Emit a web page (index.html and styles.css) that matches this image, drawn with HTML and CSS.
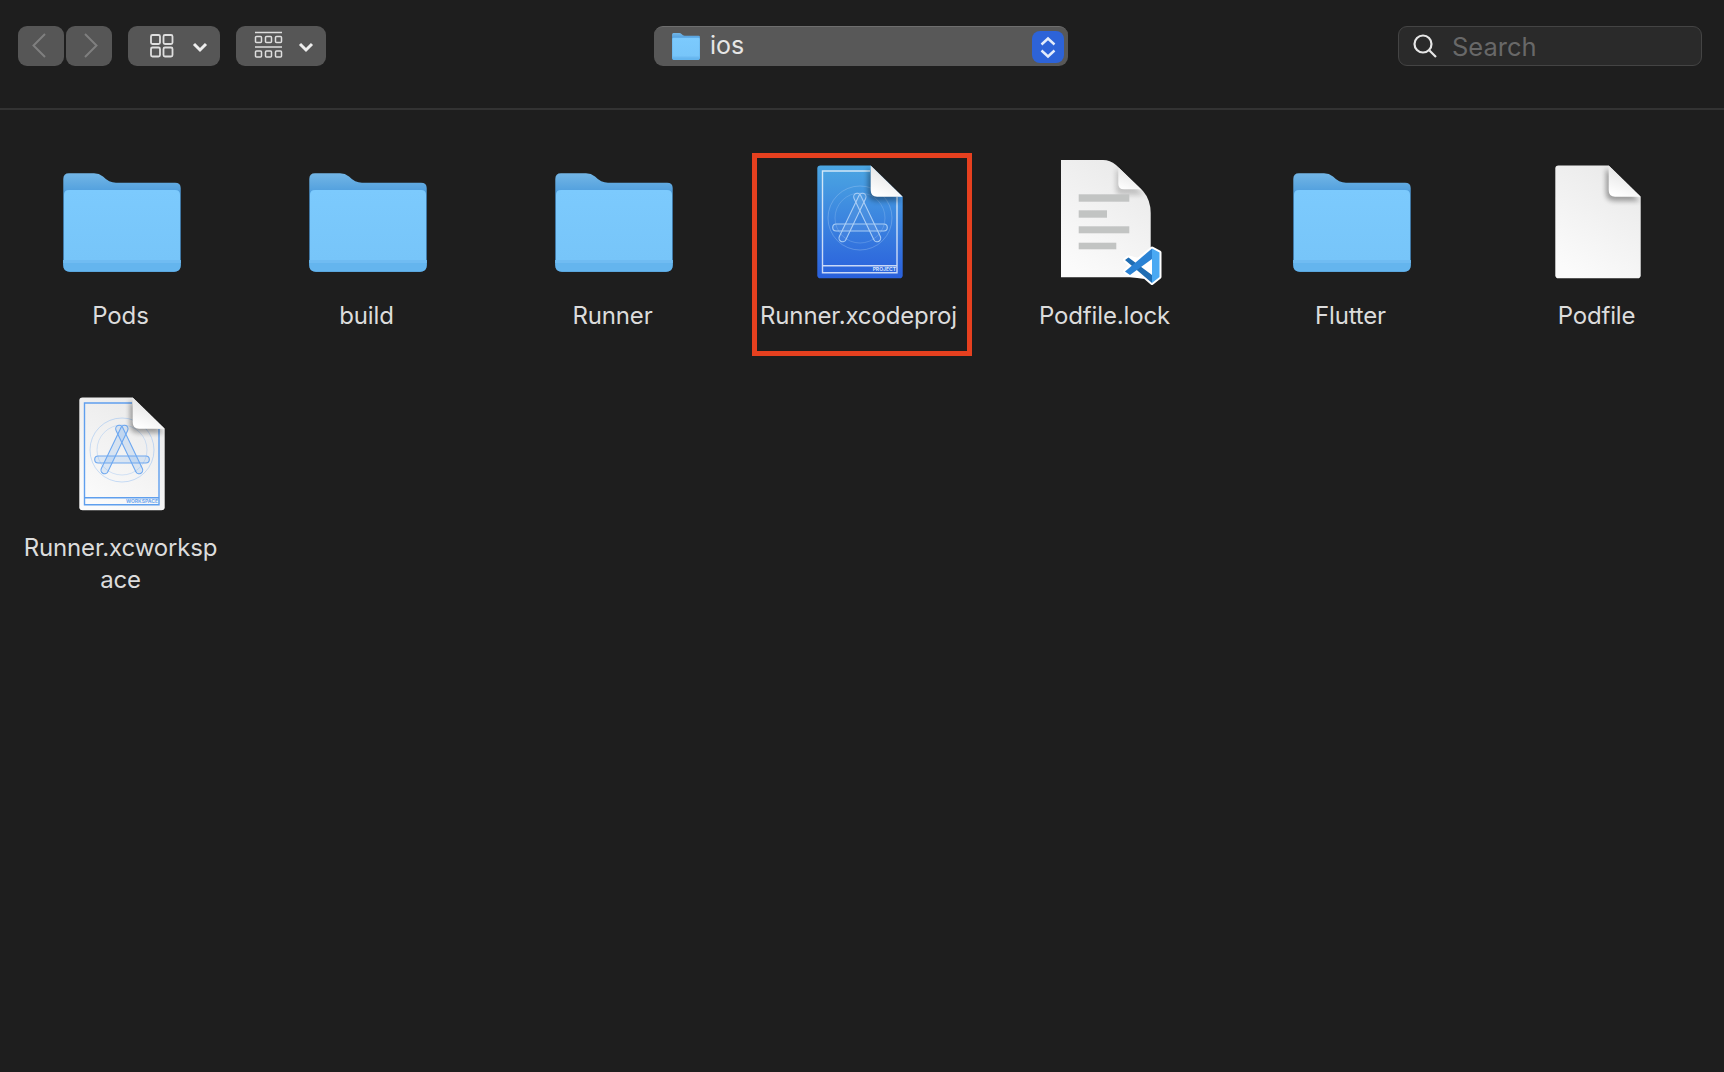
FILE: index.html
```html
<!DOCTYPE html>
<html lang="en">
  <head>
    <meta charset="UTF-8" />
    <title>ios</title>
    <link rel="stylesheet" href="styles.css">
  </head>
  <body>
    <!-- shared icon parts -->
    <svg class="defs" aria-hidden="true">
      <defs>
        <linearGradient id="folderBack" x1="0" y1="0" x2="0" y2="1">
          <stop offset="0" stop-color="#73b6e6" />
          <stop offset="0.2" stop-color="#4f9edd" />
          <stop offset="1" stop-color="#4f9edd" />
        </linearGradient>
        <linearGradient id="folderFront" x1="0" y1="0" x2="0" y2="1">
          <stop offset="0" stop-color="#7ccafd" />
          <stop offset="1" stop-color="#77c5f9" />
        </linearGradient>
        <linearGradient id="foldFill" x1="0.7" y1="0" x2="0.3" y2="1">
          <stop offset="0" stop-color="#dedede" />
          <stop offset="1" stop-color="#ffffff" />
        </linearGradient>
        <linearGradient id="paper" x1="0.8" y1="0" x2="0.3" y2="1">
          <stop offset="0" stop-color="#e9e9e9" />
          <stop offset="1" stop-color="#fbfbfb" />
        </linearGradient>
        <linearGradient id="projectBlue" x1="0" y1="0" x2="0" y2="1">
          <stop offset="0" stop-color="#4ba6e2" />
          <stop offset="1" stop-color="#2a60dc" />
        </linearGradient>
        <filter id="foldShadow" x="-30%" y="-30%" width="160%" height="160%">
          <feGaussianBlur stdDeviation="2.5" />
        </filter>
        <symbol id="folder" viewBox="0 0 136 128">
          <path fill="url(#folderBack)" d="M9.3 19Q9.3 13.3 15 13.3H40Q45 13.3 49 16.5Q55 22.7 62 22.7H121Q126.7 22.7 126.7 28V105Q126.7 111.7 120 111.7H16Q9.3 111.7 9.3 105Z" />
          <path fill="url(#folderFront)" d="M10 35Q10 30 15 30H121Q126 30 126 35V101H10Z" />
          <path fill="#64b5ee" d="M9.3 100H126.7V105Q126.7 111.7 120 111.7H16Q9.3 111.7 9.3 105Z" />
          <path fill="#70bcf2" d="M9.3 100H126.7V103H9.3Z" />
        </symbol>
        <symbol id="docFold" viewBox="0 0 136 128">
          <path fill="#000" opacity="0.35" filter="url(#foldShadow)" d="M76 8V33Q76 41 85 41H110Z" />
          <path fill="url(#foldFill)" d="M78.7 5.5L110.7 36.7H85Q78.7 36.7 78.7 30Z" />
        </symbol>
        <symbol id="xcodeMark" viewBox="0 0 136 128">
          <circle cx="68" cy="58" r="32" fill="none" stroke-width="0.8" opacity="0.45" />
          <circle cx="68" cy="58" r="25" fill="none" stroke-width="0.8" opacity="0.35" />
          <g stroke-width="1.1">
            <rect x="-3.6" y="-26.5" width="7.2" height="53" rx="3.6" transform="translate(60.5 57.5) rotate(25.6)" />
            <rect x="-3.6" y="-26.5" width="7.2" height="53" rx="3.6" transform="translate(75.2 57.5) rotate(-25.6)" />
            <rect x="40.7" y="64" width="54.6" height="7" rx="3.5" />
          </g>
        </symbol>
      </defs>
    </svg>

    <header class="toolbar">
      <button class="tool-btn nav-btn">
        <svg width="46" height="40" viewBox="0 0 46 40"><path class="nav-arrow" d="M27 8L15.5 19.5L27 31" /></svg>
      </button>
      <button class="tool-btn nav-btn nav-next">
        <svg width="46" height="40" viewBox="0 0 46 40"><path class="nav-arrow" d="M19 8L30.5 19.5L19 31" /></svg>
      </button>

      <button class="tool-btn view-btn">
        <svg width="92" height="40" viewBox="0 0 92 40">
          <g class="glyph-line">
            <rect x="23" y="9" width="9" height="9" rx="1.5" />
            <rect x="35.5" y="9" width="9" height="9" rx="1.5" />
            <rect x="23" y="21.5" width="9" height="9" rx="1.5" />
            <rect x="35.5" y="21.5" width="9" height="9" rx="1.5" />
          </g>
          <path class="drop-arrow" d="M66 18L72 24L78 18" />
        </svg>
      </button>

      <button class="tool-btn group-btn">
        <svg width="90" height="40" viewBox="0 0 90 40">
          <g class="glyph-line thin">
            <path d="M19 6.5H46M19 21H46" />
            <rect x="19.5" y="10.5" width="6" height="6" rx="1" />
            <rect x="29.5" y="10.5" width="6" height="6" rx="1" />
            <rect x="39.5" y="10.5" width="6" height="6" rx="1" />
            <rect x="19.5" y="25" width="6" height="6" rx="1" />
            <rect x="29.5" y="25" width="6" height="6" rx="1" />
            <rect x="39.5" y="25" width="6" height="6" rx="1" />
          </g>
          <path class="drop-arrow" d="M64 18L70 24L76 18" />
        </svg>
      </button>

      <div class="path-box">
        <svg class="path-folder" width="28" height="27" viewBox="9 13 118 99" preserveAspectRatio="none"><use href="#folder" width="136" height="128" /></svg>
        <span class="path-name">ios</span>
        <span class="stepper">
          <svg width="32" height="32" viewBox="0 0 32 32"><path class="step-arrow" d="M9.5 13.5L16 7.5L22.5 13.5M9.5 19.5L16 25.5L22.5 19.5" /></svg>
        </span>
      </div>

      <div class="search-box">
        <svg width="30" height="30" viewBox="0 0 30 30"><circle class="search-glyph" cx="12" cy="13" r="8.5" /><path class="search-glyph" d="M18.5 19.5L25 26" /></svg>
        <span class="search-text">Search</span>
      </div>
    </header>

    <main class="file-grid">
      <div class="file">
        <svg class="icon" viewBox="0 0 136 128"><use href="#folder" /></svg>
        <div class="file-name">Pods</div>
      </div>
      <div class="file">
        <svg class="icon" viewBox="0 0 136 128"><use href="#folder" /></svg>
        <div class="file-name">build</div>
      </div>
      <div class="file">
        <svg class="icon" viewBox="0 0 136 128"><use href="#folder" /></svg>
        <div class="file-name">Runner</div>
      </div>

      <div class="file marked">
        <svg class="icon" viewBox="0 0 136 128">
          <path fill="url(#projectBlue)" d="M28.5 5.5H78.7L110.7 36.7V115.2Q110.7 118.3 107.5 118.3H28.5Q25.3 118.3 25.3 115.2V8.7Q25.3 5.5 28.5 5.5Z" />
          <path class="frame-white" d="M78 11H30.5V112.7H105V37M30.5 105.7H105" />
          <use href="#xcodeMark" stroke="#a9cdf5" fill="rgba(255,255,255,0.06)" />
          <use href="#docFold" />
          <text class="doc-tag tag-project" x="104" y="111">PROJECT</text>
        </svg>
        <div class="file-name">Runner.xcodeproj</div>
      </div>

      <div class="file">
        <svg class="icon" viewBox="0 0 136 128">
          <path fill="url(#paper)" d="M23 0H65Q72 0 78 5L105 31Q112.7 40 112.7 53V117.3H23Z" />
          <path fill="#000" opacity="0.18" filter="url(#foldShadow)" d="M78 8V30Q78 35 85 35H106Z" />
          <path fill="url(#foldFill)" d="M78 5L105 31Q104 29.3 100 29.3H86Q80.3 29.3 80.3 24V7Z" />
          <g fill="#c2c4c3">
            <rect x="40.7" y="34.3" width="50.6" height="7.4" />
            <rect x="40.7" y="50.3" width="28.3" height="7.4" />
            <rect x="40.7" y="66.3" width="50.6" height="7" />
            <rect x="40.7" y="82.7" width="37.6" height="6.6" />
          </g>
          <path fill="#fff" stroke="#fff" stroke-width="4" stroke-linejoin="round" d="M114 88.5L121.5 92.5V117L114 123L107 117L92 115L87 111.5L93 106L87 100L90.5 97.5L100 100Z" />
          <path fill="#1f6db3" d="M87 100L90.5 97.5L114 115V123L107 117Z" />
          <path fill="#2a82d4" d="M114 88.5V99L92 115L87 111.5Z" />
          <path fill="#4aa9f3" d="M114 88.5L121.5 92.5V117L114 123Z" />
        </svg>
        <div class="file-name">Podfile.lock</div>
      </div>

      <div class="file">
        <svg class="icon" viewBox="0 0 136 128"><use href="#folder" /></svg>
        <div class="file-name">Flutter</div>
      </div>

      <div class="file">
        <svg class="icon" viewBox="0 0 136 128">
          <path fill="url(#paper)" d="M28.5 5.5H78.7L110.7 36.7V115.2Q110.7 118.3 107.5 118.3H28.5Q25.3 118.3 25.3 115.2V8.7Q25.3 5.5 28.5 5.5Z" />
          <use href="#docFold" />
        </svg>
        <div class="file-name">Podfile</div>
      </div>

      <div class="file">
        <svg class="icon" viewBox="0 0 136 128">
          <path fill="url(#paper)" d="M28.5 5.5H78.7L110.7 36.7V115.2Q110.7 118.3 107.5 118.3H28.5Q25.3 118.3 25.3 115.2V8.7Q25.3 5.5 28.5 5.5Z" />
          <path class="frame-blue" d="M78 11H30.5V112.7H105V37M30.5 105.7H105" />
          <use href="#xcodeMark" stroke="#6ea8f0" fill="rgba(110,168,240,0.2)" />
          <use href="#docFold" />
          <text class="doc-tag tag-workspace" x="104" y="111">WORKSPACE</text>
        </svg>
        <div class="file-name">Runner.xcworkspace</div>
      </div>
    </main>
  </body>
</html>
```

FILE: styles.css
```css
html,
body {
  height: 100%;
}

body {
  margin: 0;
  background: #1e1e1e;
  font-family: "Inter", "Liberation Sans", sans-serif;
  overflow: hidden;
}

.defs {
  position: absolute;
  width: 0;
  height: 0;
}

.toolbar {
  display: flex;
  align-items: flex-start;
  height: 82px;
  padding: 26px 0 0 18px;
  border-bottom: 2px solid #333333;
}

.tool-btn {
  display: block;
  height: 40px;
  padding: 0;
  border: none;
  border-radius: 9px;
  background: #565656;
}

.tool-btn svg {
  display: block;
}

.nav-btn {
  width: 46px;
}

.nav-next {
  margin-left: 2px;
}

.view-btn {
  width: 92px;
  margin-left: 16px;
}

.group-btn {
  width: 90px;
  margin-left: 16px;
}

.nav-arrow {
  fill: none;
  stroke: #7f7f7f;
  stroke-width: 2;
}

.glyph-line {
  fill: none;
  stroke: #dedede;
  stroke-width: 1.8;
}

.glyph-line.thin {
  stroke-width: 1.5;
}

.drop-arrow {
  fill: none;
  stroke: #ededed;
  stroke-width: 3;
}

.path-box {
  display: flex;
  align-items: center;
  width: 414px;
  height: 40px;
  margin-left: 328px;
  padding: 0 4px 0 18px;
  box-sizing: border-box;
  border-radius: 9px;
  border-top: 1px solid #6e6e6e;
  background: #585858;
}

.path-name {
  margin-left: 10px;
  margin-bottom: 4px;
  font-size: 25px;
  color: #e6e6e6;
}

.stepper {
  margin-left: auto;
  width: 32px;
  height: 32px;
  border-radius: 8px;
  background: #2d63d8;
}

.stepper svg {
  display: block;
}

.step-arrow {
  fill: none;
  stroke: #e4ecfb;
  stroke-width: 2.4;
}

.search-box {
  display: flex;
  align-items: center;
  width: 304px;
  height: 40px;
  margin-left: 330px;
  padding-left: 12px;
  box-sizing: border-box;
  border: 1px solid #444444;
  border-radius: 9px;
  background: #2a2a2a;
}

.search-glyph {
  fill: none;
  stroke: #e6e6e6;
  stroke-width: 2.2;
}

.search-text {
  margin-left: 11px;
  font-size: 25.5px;
  color: #686868;
}

.file-grid {
  display: grid;
  grid-template-columns: repeat(7, 201px);
  grid-auto-rows: 232px;
  column-gap: 45px;
  padding: 50px 0 0 20px;
}

.file {
  position: relative;
}

.icon {
  display: block;
  width: 136px;
  height: 128px;
  margin-left: 34px;
}

.file-name {
  margin-top: 12px;
  font-size: 24px;
  letter-spacing: -0.15px;
  line-height: 32px;
  text-align: center;
  color: #dcdcdc;
  word-break: break-all;
}

.marked::after {
  content: "";
  position: absolute;
  left: -6px;
  top: -7px;
  width: 220px;
  height: 203px;
  box-sizing: border-box;
  border: 5px solid #e6401f;
}

.frame-white,
.frame-blue {
  fill: none;
  stroke-width: 1.4;
}

.frame-white {
  stroke: rgba(255, 255, 255, 0.75);
}

.frame-blue {
  stroke: #5f9fee;
}

.doc-tag {
  font-size: 5px;
  font-weight: 700;
  text-anchor: end;
}

.tag-project {
  fill: #d5e3fb;
}

.tag-workspace {
  fill: #6ea8f0;
}
```
